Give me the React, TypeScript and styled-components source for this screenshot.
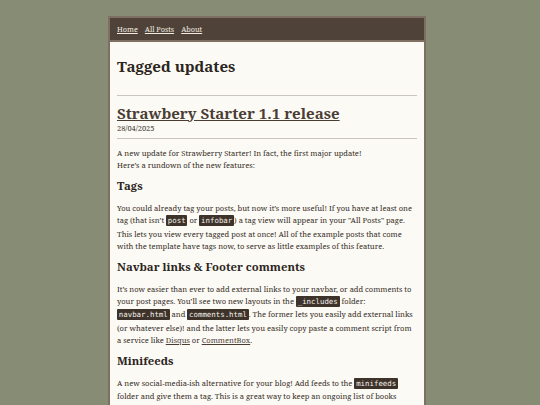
import React from "react";
import styled, { createGlobalStyle } from "styled-components";

const Global = createGlobalStyle`
  html, body { margin: 0; padding: 0; }
  body {
    background: #878c74;
    font-family: "Noto Serif", "DejaVu Serif", "Liberation Serif", serif;
    color: #2b2522;
  }
  ::-webkit-scrollbar { display: none; }
`;

const Page = styled.div`
  width: 318px;
  margin: 16px 0 0 108px;
  box-sizing: border-box;
  border: 2px solid #7e6f63;
  background: #fcfaf4;
`;

const Nav = styled.nav`
  background: #4f4238;
  height: 22px;
  display: flex;
  align-items: center;
  gap: 7px;
  padding: 0 7px;
  border-bottom: 2px solid #7e6f63;
`;

const NavLink = styled.a`
  color: #f1ebe1;
  font-size: 7.3px;
  text-decoration: underline;
`;

const Main = styled.main`
  padding: 14px 7px 0 7px;
`;

const PageTitle = styled.h1`
  font-size: 15.1px;
  font-weight: 700;
  margin: 0 0 19px;
  line-height: 20px;
`;

const Rule = styled.hr`
  border: none;
  border-top: 1px solid #c9c4bc;
  margin: 0;
`;

const PostTitle = styled.h2`
  font-size: 15.1px;
  margin: 8px 0 0;
  line-height: 18px;
  a { color: #4a3d34; text-decoration: underline; }
`;

const Date = styled.div`
  font-size: 7.4px;
  line-height: 10px;
  color: #3a322d;
  margin: 1px 0 5px;
`;

const Intro = styled.div`
  padding-top: 8px;
`;

const P = styled.p`
  font-size: 7.55px;
  line-height: 12.3px;
  color: #352d28;
  margin: 0 0 7.5px;
`;

const H3 = styled.h3`
  font-size: 11.3px;
  margin: 0 0 9px;
  line-height: 14px;
  color: #2b2522;
`;

const Code = styled.code`
  font-family: "DejaVu Sans Mono", "Liberation Mono", monospace;
  font-size: 7.4px;
  background: #3e332b;
  color: #f3efe8;
  padding: 1px 1.8px;
  border-radius: 1px;
`;

const Link = styled.a`
  color: #4a3d34;
  text-decoration: underline;
`;

export default function App() {
  return (
    <>
      <Global />
      <Page>
        <Nav>
          <NavLink href="#">Home</NavLink>
          <NavLink href="#">All Posts</NavLink>
          <NavLink href="#">About</NavLink>
        </Nav>
        <Main>
          <PageTitle>Tagged updates</PageTitle>
          <Rule />
          <PostTitle><a href="#">Strawbery Starter 1.1 release</a></PostTitle>
          <Date>28/04/2025</Date>
          <Rule />
          <Intro>
            <P>
              A new update for Strawberry Starter! In fact, the first major update!
              <br />
              Here’s a rundown of the new features:
            </P>
            <H3>Tags</H3>
            <P>
              You could already tag your posts, but now it’s more useful! If you have at least one
              tag (that isn’t <Code>post</Code> or <Code>infobar</Code>) a tag view will appear in your "All Posts" page.
              This lets you view every tagged post at once! All of the example posts that come
              with the template have tags now, to serve as little examples of this feature.
            </P>
            <H3>Navbar links &amp; Footer comments</H3>
            <P>
              It’s now easier than ever to add external links to your navbar, or add comments to
              your post pages. You’ll see two new layouts in the <Code>_includes</Code> folder:{" "}
              <Code>navbar.html</Code> and <Code>comments.html</Code>. The former lets you easily add external links
              (or whatever else)! and the latter lets you easily copy paste a comment script from
              a service like <Link href="#">Disqus</Link> or <Link href="#">CommentBox</Link>.
            </P>
            <H3>Minifeeds</H3>
            <P>
              A new social-media-ish alternative for your blog! Add feeds to the <Code>minifeeds</Code>{" "}
              folder and give them a tag. This is a great way to keep an ongoing list of books
              you’ve read or stuff you’re doing. Posts added to the minifeeds folder won’t count
              towards your post count.
            </P>
          </Intro>
        </Main>
      </Page>
    </>
  );
}
